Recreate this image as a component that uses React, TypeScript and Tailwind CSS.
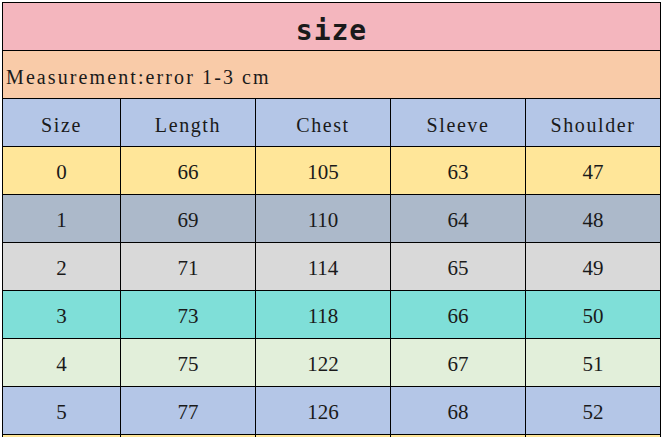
const rows = [
  { bg: 'bg-[#ffe699]', v: ['0', '66', '105', '63', '47'] },
  { bg: 'bg-[#acb9ca]', v: ['1', '69', '110', '64', '48'] },
  { bg: 'bg-[#d9d9d9]', v: ['2', '71', '114', '65', '49'] },
  { bg: 'bg-[#7fdfd8]', v: ['3', '73', '118', '66', '50'] },
  { bg: 'bg-[#e2efda]', v: ['4', '75', '122', '67', '51'] },
  { bg: 'bg-[#b4c6e7]', v: ['5', '77', '126', '68', '52'] },
];

const heads = ['Size', 'Length', 'Chest', 'Sleeve', 'Shoulder'];

const cell = 'h-[48px] border-r border-b border-black flex items-center justify-center';

export default function App() {
  return (
    <div className="w-[663px] h-[437px] overflow-hidden bg-white pt-[2px] pl-[2px]">
      <div className="grid grid-cols-[118px_135px_135px_135px_135px] border-l border-t border-black w-[659px] text-[#1a1a1a]">
        <div className={`${cell} col-span-5 bg-[#f4b6be] pt-[9px]`}>
          <span className="font-['DejaVu_Sans_Mono',monospace] font-bold text-[28px] leading-none tracking-[1px]">size</span>
        </div>
        <div className={`${cell} col-span-5 bg-[#f9cba8] !justify-start pl-[3px] pt-[4px]`}>
          <span className="font-['Liberation_Serif',serif] text-[20px] tracking-[2.1px]">Measurement:error 1-3 cm</span>
        </div>
        {heads.map((h) => (
          <div key={h} className={`${cell} bg-[#b4c6e7] pt-[4px] font-['Liberation_Serif',serif] text-[20px] tracking-[1.6px]`}>
            {h}
          </div>
        ))}
        {rows.map((r) =>
          r.v.map((v, i) => (
            <div key={r.v[0] + '-' + i} className={`${cell} ${r.bg} pt-[4px] font-['Liberation_Serif',serif] text-[21px]`}>
              {v}
            </div>
          ))
        )}
        {heads.map((h) => (
          <div key={'y' + h} className={`${cell} bg-[#ffe699]`} />
        ))}
      </div>
    </div>
  );
}
